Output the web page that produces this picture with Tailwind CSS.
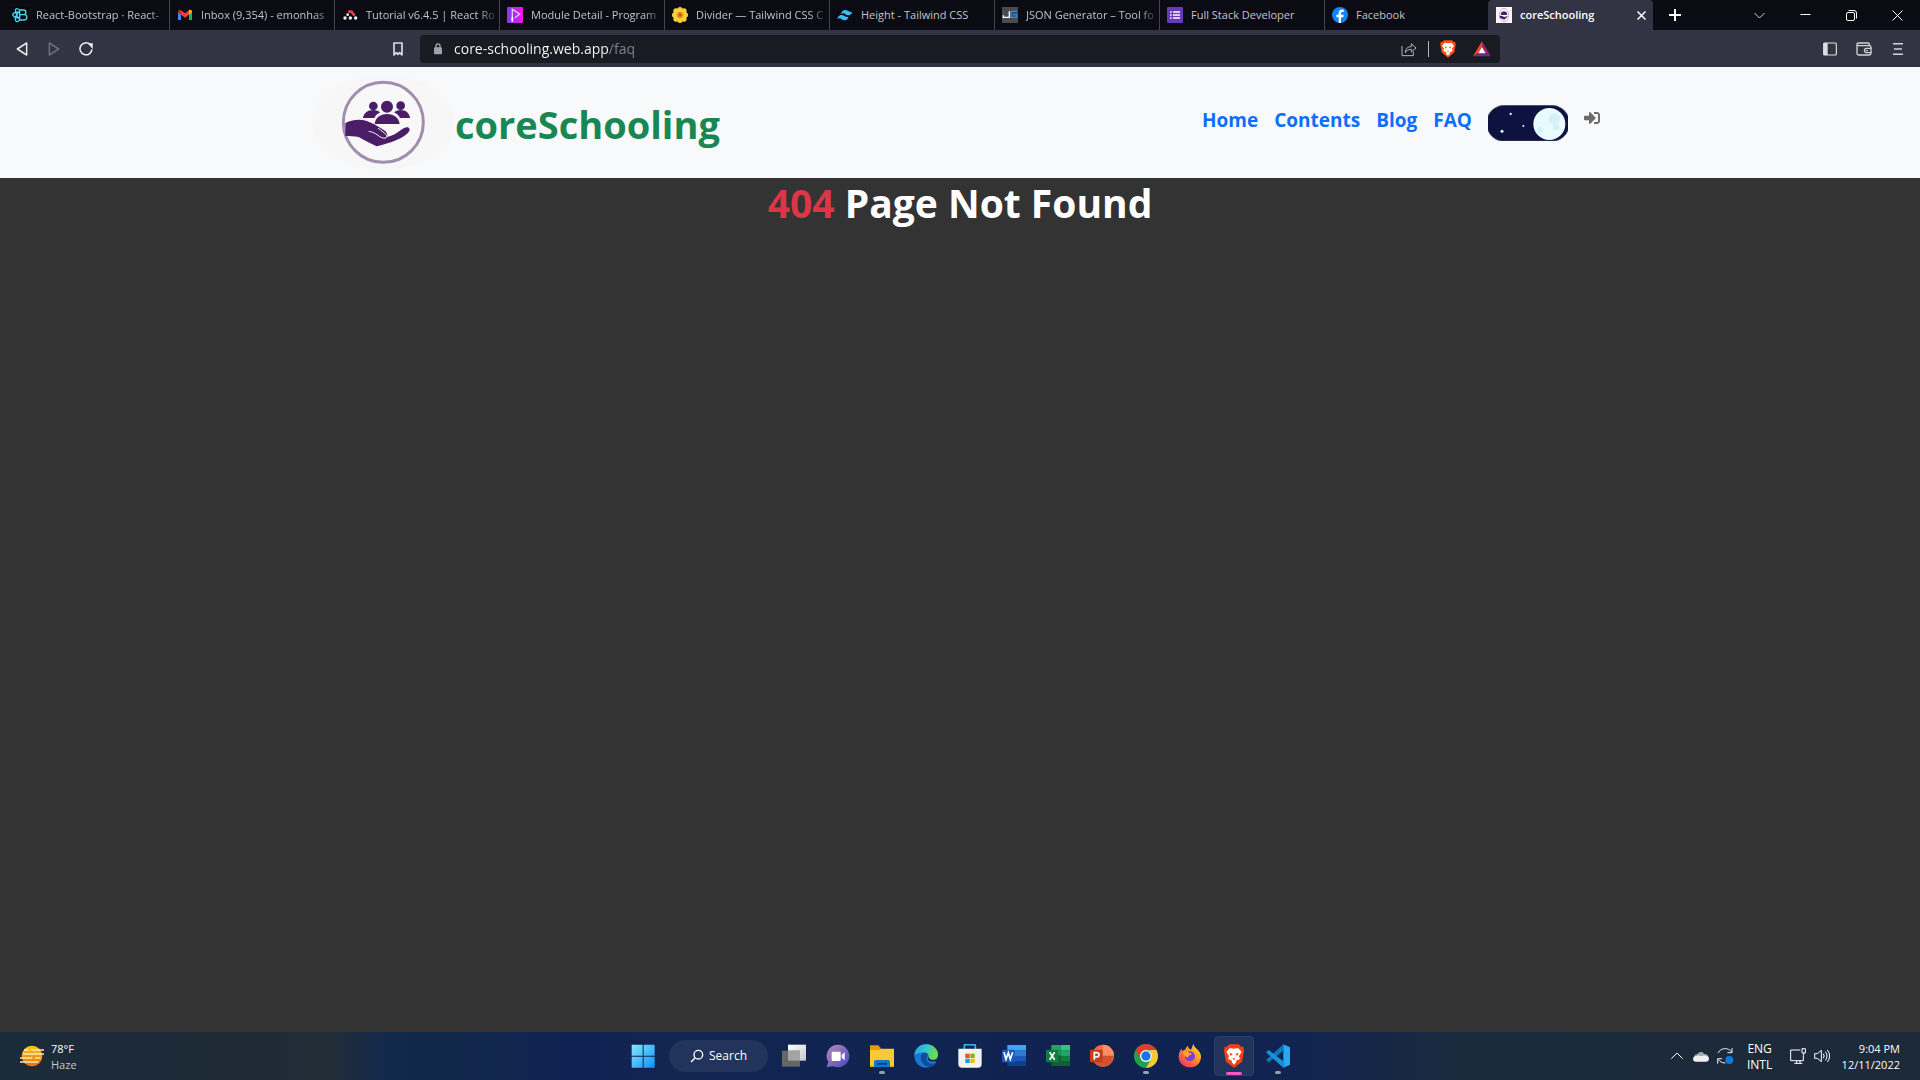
<!DOCTYPE html>
<html lang="en">
<head>
<meta charset="utf-8">
<title>coreSchooling</title>
<script src="https://cdn.jsdelivr.net/npm/@tailwindcss/browser@4"></script>
</head>
<body class="flex min-h-screen flex-col bg-[#333333] font-['Open_Sans','Noto_Sans',sans-serif]">

<!-- Tab strip -->
<div class="flex h-[30px] items-stretch bg-[#0b0b13] pl-1 text-[11px] text-[#c3c4ca]">
  <nav aria-label="Tabs" class="flex min-w-0">
    <a href="#" class="flex w-[165px] items-center gap-2 pl-2">
      <svg class="size-4 shrink-0" viewBox="0 0 48 48"><rect width="48" height="48" fill="#05070a"/><g fill="none" stroke="#41d8f5" stroke-width="4"><path d="M23 9h12c9 0 9 14 0 14H23zM23 23h14c10 0 10 16 0 16H23z"/><path d="M23 15C8 14 0 19 3 25c3 6 12 8 20 8M23 9C12 0 8 7 12 18c2 7 6 14 10 18M23 39C12 50 8 40 11 30c2-6 6-12 12-18"/></g></svg>
      <span class="flex-1 overflow-hidden whitespace-nowrap mask-r-from-85%">React-Bootstrap · React-</span>
    </a>
    <a href="#" class="flex w-[165px] items-center gap-2 bg-linear-to-r from-[#44454c] from-[1px] to-transparent to-[1px] pl-2">
      <svg class="size-4 shrink-0" viewBox="0 0 48 48"><path d="M3 12v27h9V20z" fill="#4285f4"/><path d="M45 12v27h-9V20z" fill="#34a853"/><path d="M12 10v13l12 9 12-9V10l-12 9z" fill="#ea4335"/><path d="M3 15c0-6 5-8 9-5v13l-9-7z" fill="#c5221f"/><path d="M45 15c0-6-5-8-9-5v13l9-7z" fill="#fbbc04"/></svg>
      <span class="flex-1 overflow-hidden whitespace-nowrap mask-r-from-85%">Inbox (9,354) - emonhas</span>
    </a>
    <a href="#" class="flex w-[165px] items-center gap-2 bg-linear-to-r from-[#44454c] from-[1px] to-transparent to-[1px] pl-2">
      <svg class="size-4 shrink-0" viewBox="0 0 48 48"><g fill="#f5f5f5"><circle cx="9" cy="33" r="5"/><circle cx="17" cy="23" r="4"/><circle cx="25" cy="33" r="5"/><circle cx="41" cy="33" r="5"/></g><path d="M22 14h5c7 0 4 9 9 9" fill="none" stroke="#e34050" stroke-width="8" stroke-linecap="round"/></svg>
      <span class="flex-1 overflow-hidden whitespace-nowrap mask-r-from-85%">Tutorial v6.4.5 | React Ro</span>
    </a>
    <a href="#" class="flex w-[165px] items-center gap-2 bg-linear-to-r from-[#44454c] from-[1px] to-transparent to-[1px] pl-2">
      <svg class="size-4 shrink-0" viewBox="0 0 48 48"><defs><linearGradient id="ph" x1="0" x2="1"><stop stop-color="#7b3cf6"/><stop offset="1" stop-color="#f016e8"/></linearGradient></defs><rect width="48" height="48" rx="3" fill="url(#ph)"/><path d="M16 42V7l22 14-14 11" fill="none" stroke="#e8c8ff" stroke-width="4"/><path d="M16 30v14" stroke="#fff" stroke-width="5"/></svg>
      <span class="flex-1 overflow-hidden whitespace-nowrap mask-r-from-85%">Module Detail - Program</span>
    </a>
    <a href="#" class="flex w-[165px] items-center gap-2 bg-linear-to-r from-[#44454c] from-[1px] to-transparent to-[1px] pl-2">
      <svg class="size-4 shrink-0" viewBox="0 0 48 48"><g fill="#f8cf3c"><circle cx="24" cy="8" r="8"/><circle cx="36" cy="12" r="8"/><circle cx="40" cy="24" r="8"/><circle cx="36" cy="36" r="8"/><circle cx="24" cy="40" r="8"/><circle cx="12" cy="36" r="8"/><circle cx="8" cy="24" r="8"/><circle cx="12" cy="12" r="8"/><circle cx="24" cy="24" r="14"/></g><circle cx="24" cy="24" r="9" fill="#e57f12"/><circle cx="24" cy="24" r="4" fill="#c95c08"/></svg>
      <span class="flex-1 overflow-hidden whitespace-nowrap mask-r-from-85%">Divider — Tailwind CSS C</span>
    </a>
    <a href="#" class="flex w-[165px] items-center gap-2 bg-linear-to-r from-[#44454c] from-[1px] to-transparent to-[1px] pl-2">
      <svg class="size-4 shrink-0" viewBox="0 0 48 48"><g fill="#38bdf8"><path d="M12 21c2-8 6-12 13-12 9 0 9 8 21 5-3 8-7 11-12 11-10 0-11-10-22-4z"/><path d="M1 36c2-8 6-12 13-12 9 0 9 8 21 5-3 8-7 11-12 11-10 0-11-10-22-4z"/></g></svg>
      <span class="flex-1 overflow-hidden whitespace-nowrap">Height - Tailwind CSS</span>
    </a>
    <a href="#" class="flex w-[165px] items-center gap-2 bg-linear-to-r from-[#44454c] from-[1px] to-transparent to-[1px] pl-2">
      <svg class="size-4 shrink-0" viewBox="0 0 48 48"><rect width="48" height="48" fill="#4b4c50"/><path d="M4 25v6h18V13" fill="none" stroke="#fff" stroke-width="4"/><path d="M45 13H27v18h17v-8H33" fill="none" stroke="#1d8ff0" stroke-width="4"/></svg>
      <span class="flex-1 overflow-hidden whitespace-nowrap mask-r-from-85%">JSON Generator – Tool fo</span>
    </a>
    <a href="#" class="flex w-[165px] items-center gap-2 bg-linear-to-r from-[#44454c] from-[1px] to-transparent to-[1px] pl-2">
      <svg class="size-4 shrink-0" viewBox="0 0 48 48"><rect width="48" height="48" rx="3" fill="#673ab7"/><path d="M9 15h5M9 24h5M9 33h5M18 15h21M18 24h21M18 33h21" stroke="#fff" stroke-width="5"/></svg>
      <span class="flex-1 overflow-hidden whitespace-nowrap">Full Stack Developer</span>
    </a>
    <a href="#" class="flex w-[164px] items-center gap-2 bg-linear-to-r from-[#44454c] from-[1px] to-transparent to-[1px] pl-2">
      <svg class="size-4 shrink-0" viewBox="0 0 48 48"><circle cx="24" cy="24" r="24" fill="#1186f2"/><path d="M20 48V31h-7v-8h7v-5c0-8 5-12 15-10v7c-5-1-8 0-8 4v4h8l-1 8h-7v17z" fill="#fff"/></svg>
      <span class="flex-1 overflow-hidden whitespace-nowrap">Facebook</span>
    </a>
    <div class="flex w-[165px] items-center gap-2 rounded-t bg-[#323443] pl-2 text-white">
      <svg class="size-4 shrink-0" viewBox="0 0 48 48"><rect width="48" height="48" fill="#faf8fb"/><ellipse cx="24" cy="24" rx="14" ry="20" fill="none" stroke="#c3b5d0" stroke-width="3"/><path d="M14 19q10-12 20 0l-2 5H16zM11 27c7-3 10 2 14 3l11-3-11 11-13-5z" fill="#4a1d66"/></svg>
      <a href="#" class="flex-1 overflow-hidden font-semibold whitespace-nowrap">coreSchooling</a>
      <button aria-label="Close tab" class="flex h-5 w-6 items-center justify-center"><svg class="size-[9px]" viewBox="0 0 9 9" stroke="#fff" stroke-width="1.500"><path d="M.5.5l8 8M8.500.5l-8 8"/></svg></button>
    </div>
  </nav>
  <button aria-label="New tab" class="flex w-11 items-center justify-center"><svg class="size-3" viewBox="0 0 12 12" stroke="#fff" stroke-width="2"><path d="M6 0v12M0 6h12"/></svg></button>
  <div class="ml-auto flex">
    <button aria-label="Search tabs" class="flex w-[46px] items-center justify-center"><svg class="size-[11px]" viewBox="0 0 11 11" fill="none" stroke="#d5d5d9"><path d="M.5 3l5 5 5-5"/></svg></button>
    <button aria-label="Minimize" class="flex w-[46px] items-center justify-center"><svg class="size-[11px]" viewBox="0 0 11 11" stroke="#fff"><path d="M.5 4.500h10"/></svg></button>
    <button aria-label="Restore" class="flex w-[46px] items-center justify-center"><svg class="size-[11px]" viewBox="0 0 11 11" fill="none" stroke="#fff"><rect x=".5" y="2.500" width="8" height="8" rx="1.500"/><path d="M2.500.5H8a2.500 2.500 0 0 1 2.500 2.500v5.500"/></svg></button>
    <button aria-label="Close" class="flex w-[46px] items-center justify-center"><svg class="size-[11px]" viewBox="0 0 11 11" stroke="#fff"><path d="M.5.5l10 10M10.500.5l-10 10"/></svg></button>
  </div>
</div>

<!-- Toolbar -->
<div class="flex h-[37px] items-center bg-[#323443]">
  <div class="flex w-[420px] items-center px-1.5">
    <button aria-label="Back" class="flex h-7 w-8 items-center justify-center"><svg class="size-3.5" viewBox="0 0 42 42" fill="none" stroke="#e8e8ec" stroke-width="4.500" stroke-linejoin="round"><path d="M35 3v36L7 21z"/></svg></button>
    <button aria-label="Forward" class="flex h-7 w-8 items-center justify-center"><svg class="size-3.5" viewBox="0 0 42 42" fill="none" stroke="#6c6e7b" stroke-width="4.500" stroke-linejoin="round"><path d="M7 3v36l28-18z"/></svg></button>
    <button aria-label="Reload" class="flex h-7 w-8 items-center justify-center"><svg class="size-3.5" viewBox="0 0 42 42" fill="none" stroke="#f0f0f3" stroke-width="4.500"><path d="M33 7a18 18 0 1 0 6 15"/><path d="M31 6h8v9z" fill="#f0f0f3"/></svg></button>
    <button aria-label="Bookmark" class="ml-auto flex h-7 w-8 items-center justify-center"><svg class="size-3.5" viewBox="0 0 42 42" fill="none" stroke="#dddde2" stroke-width="5" stroke-linejoin="round"><path d="M9 3h24v36l-7-7-5 5-5-5-7 7z"/></svg></button>
  </div>
  <form class="flex h-7 flex-1 items-center rounded bg-[#181b22] pr-0.5 pl-3.5">
    <svg class="h-3 w-2" viewBox="0 0 24 36"><rect y="13" width="24" height="21" rx="3" fill="#a0a1a8"/><path d="M6 15V9a6 6 0 0 1 12 0v6" fill="none" stroke="#a0a1a8" stroke-width="4"/></svg>
    <input aria-label="Address" type="text" value="core-schooling.web.app/faq" class="ml-3 h-6 min-w-0 flex-1 bg-linear-to-r from-white from-[155px] to-[#81848d] to-[155px] bg-clip-text text-sm text-transparent outline-none">
    <button type="button" aria-label="Share" class="flex w-7 justify-center"><svg class="size-4" viewBox="0 0 48 48" fill="none" stroke="#b5b6bc" stroke-width="3" stroke-linejoin="round"><path d="M3 15v29h34V32"/><path d="M13 35c1-14 8-18 18-18V8l14 13-14 12v-8c-9 0-13 2-18 10z"/></svg></button>
    <span class="mx-[5px] h-4 w-px bg-[#b5b6bc]"></span>
    <button type="button" aria-label="Brave Shields" class="flex w-7 justify-center"><svg class="h-[18px] w-4" viewBox="0 0 48 54"><path d="M12 1h24l5 5 5 0 1 9-4 22-19 16L5 37 1 15l1-9h5z" fill="#fb4f14"/><path d="M14 8l10 2 10-2 8 9-6 9 2 7-9 4 1 4-6 6-6-6 1-4-9-4 2-7-6-9z" fill="#fff"/><path d="M14 19l7 3-4 4zM34 19l-7 3 4 4zM21 32h6l-3 4z" fill="#fb4f14"/></svg></button>
    <button type="button" aria-label="Rewards" class="ml-1 flex w-8 justify-center"><svg class="size-[18px]" viewBox="0 0 54 54"><path d="M27 4L0 49l16-9 11-19z" fill="#ff4724"/><path d="M27 4l27 45-16-9-11-19z" fill="#9e1f63"/><path d="M0 49h54l-16-9H16z" fill="#662d91"/><path d="M27 21L16 40h22z" fill="#fff"/></svg></button>
  </form>
  <div class="flex w-[420px] justify-end pr-[5px]">
    <button aria-label="Sidebar" class="flex h-7 w-[34px] items-center justify-center"><svg class="size-3.5" viewBox="0 0 42 42"><rect x="2" y="3" width="38" height="36" rx="3" fill="none" stroke="#dedee3" stroke-width="3.500"/><path d="M2 3h12v36H2z" fill="#dedee3"/></svg></button>
    <button aria-label="Wallet" class="flex h-7 w-[34px] items-center justify-center"><svg class="size-4" viewBox="0 0 48 48" fill="none" stroke="#d2d3d9" stroke-width="4"><path d="M40 13v-3c0-3-2-4-4-4H8c-7 0-7 8 0 8h32c3 0 5 2 5 5v18c0 3-2 5-5 5H8c-3 0-5-2-5-5V10"/><path d="M46 22H32a6 6 0 0 0 0 13h14M31 29h5"/></svg></button>
    <button aria-label="Menu" class="flex h-7 w-[34px] items-center justify-center"><svg class="size-3.5" viewBox="0 0 42 42" stroke="#d2d3d9" stroke-width="4.500"><path d="M6 5h30M9 21h24M6 37h30"/></svg></button>
  </div>
</div>

<!-- Site header -->
<header class="bg-[#f8f9fa] py-2">
  <div class="mx-auto flex max-w-[1320px] items-center px-3">
    <a href="#" class="flex items-center text-[38px] leading-[48px] font-bold text-[#198754]">
      <svg class="h-[95px] w-[143px]" viewBox="36 27 429 285"><ellipse cx="250" cy="169" rx="214" ry="142" fill="#f7f7f7"/>
        <circle cx="250" cy="169" r="120" fill="#f8f8f9" stroke="#9f8eae" stroke-width="9"/>
        <g fill="#4a1d66"><circle cx="220" cy="120" r="13"/><circle cx="302" cy="119" r="13"/>
        <path d="M189 156c2-14 13-24 31-24 8 0 16 3 21 7-8 4-14 9-18 17zM330 156c-2-14-11-24-29-24-8 0-14 3-19 7 8 4 14 9 18 17z"/>
        <ellipse cx="261" cy="122" rx="18" ry="18"/><path d="M224 174c2-17 15-30 37-30s36 13 38 30z"/>
        <path d="M136 171c22-10 42-12 62-7 18 6 34 15 52 27 10 6 15 14 10 22 20-3 30-12 42-20 8-6 16-11 24-8 6 5 2 12-6 19-19 17-46 25-90 37-20-9-36-18-54-28-13-3-27-3-40-3z"/></g>
        <path d="M206 196c12 2 18 5 28 12 7 6 15 10 24 8 6-4 0-11-6-16-8-6-12-10-18-13" fill="none" stroke="#f8f8f9" stroke-width="3"/>
      </svg>
      <span class="pt-0.5">coreSchooling</span>
    </a>
    <nav aria-label="Main" class="ml-auto flex gap-4 pr-2 text-[19px] leading-8 font-bold text-[#0d6efd]">
      <a href="#">Home</a><a href="#">Contents</a><a href="#">Blog</a><a href="#">FAQ</a>
      <button aria-label="Toggle dark mode" class="mt-px h-9 w-20"><svg class="h-9 w-20" viewBox="924 57 240 108"><path d="M964 165a54 54 0 0 1 14-107h132a54 54 0 0 1 14 107z" fill="#0e1240" stroke="#555a72" stroke-width="2"/><circle cx="1108" cy="114" r="48" fill="#e9fbff"/><g fill="#d4f1f6"><circle cx="1123" cy="98" r="17"/><circle cx="1079" cy="132" r="9"/><circle cx="1128" cy="123" r="10"/></g><g fill="#e9f4ff"><circle cx="992" cy="84" r="3.500"/><circle cx="966" cy="136" r="4.500"/><circle cx="1030" cy="120" r="3"/></g></svg></button>
      <a href="#" aria-label="Log in" class="flex h-7 items-center"><svg class="size-4" viewBox="0 0 512 512" fill="#6c6c6c"><path d="M416 448h-84c-7 0-12-5-12-12v-40c0-7 5-12 12-12h84c18 0 32-14 32-32V160c0-18-14-32-32-32h-84c-7 0-12-5-12-12V76c0-7 5-12 12-12h84c53 0 96 43 96 96v192c0 53-43 96-96 96zM369 239L201 71c-15-15-41-4-41 17v96H24c-13 0-24 11-24 24v96c0 13 11 24 24 24h136v96c0 21 26 32 41 17l168-168c9-9 9-25 0-34z"/></svg></a>
    </nav>
  </div>
</header>

<main class="flex-1">
  <h1 class="text-center text-[39px] leading-[50px] font-bold text-white"><span class="text-[#dc3545]">404</span> Page Not Found</h1>
</main>

<!-- Taskbar -->
<footer class="grid h-12 grid-cols-[1fr_auto_1fr] items-center bg-[linear-gradient(90deg,#1c2b39_0%,#1e2b37_14%,#222d35_17%,#13294c_20%,#12284b_24%,#102253_30%,#122450_34%,#10224f_60%,#112450_68%,#1b2a3d_76%,#1c2a38_100%)] text-[11px] leading-4 text-white">
  <button class="flex items-center gap-1.5 justify-self-start pl-5 text-left">
    <svg class="h-6 w-6" viewBox="0 0 72 72"><defs><linearGradient id="sun" x1="0" y1="0" x2="0" y2="1"><stop stop-color="#fccb13"/><stop offset="1" stop-color="#ee6b08"/></linearGradient></defs><circle cx="36" cy="36" r="31" fill="url(#sun)"/><path d="M12 18h14M33 18h39M8 30h64M0 42h37M45 42h17M0 54h55" stroke="#f8e9bd" stroke-width="5"/></svg>
    <span class="pt-0.5 pl-px">78°F<br><span class="text-[#c3c8cd]">Haze</span></span>
  </button>

  <div class="flex items-center">
    <button aria-label="Start" class="flex w-11 justify-center"><svg class="size-6" viewBox="0 0 72 72"><defs><linearGradient id="win" x1="0" y1="0" x2="1" y2="1"><stop stop-color="#8be4ff"/><stop offset="1" stop-color="#0a94f5"/></linearGradient></defs><path d="M2 2h33v33H2zM38 2h33v33H38zM2 38h33v33H2zM38 38h33v33H38z" fill="url(#win)"/></svg></button>
    <button class="mx-1 flex h-8 w-[99px] items-center justify-center gap-1 rounded-full bg-[#22345c] text-xs"><svg class="size-4" viewBox="0 0 48 48" fill="none" stroke="#fff" stroke-width="4"><circle cx="28" cy="20" r="13"/><path d="M18 30L6 42"/></svg>Search</button>
    <button aria-label="Task view" class="flex w-11 justify-center"><svg class="size-6" viewBox="0 0 72 72"><defs><linearGradient id="tv" x1="0" y1="0" x2="1" y2="1"><stop stop-color="#fff"/><stop offset="1" stop-color="#c7c9cc"/></linearGradient></defs><path d="M18 2h54v48H18z" fill="url(#tv)"/><path d="M0 20h54v48H0z" fill="#666"/><path d="M18 20h36v30H18z" fill="#a2a3a5"/></svg></button>
    <button aria-label="Chat" class="flex w-11 justify-center"><svg class="size-6" viewBox="0 0 72 72"><defs><linearGradient id="ch" x1="0" y1="0" x2="1" y2="1"><stop stop-color="#8a8de0"/><stop offset=".3" stop-color="#9a78b8"/><stop offset="1" stop-color="#4149c5"/></linearGradient></defs><path d="M36 2a34 34 0 1 1-14 65L2 69l5-15A34 34 0 0 1 36 2z" fill="url(#ch)"/><rect x="17" y="23" width="27" height="28" rx="3" fill="#fff"/><path d="M47 33l9-8v24l-9-8z" fill="#fff"/></svg></button>
    <button aria-label="File Explorer" class="relative flex w-11 justify-center"><svg class="size-6" viewBox="0 0 72 72"><path d="M0 4h25l7 8v12H0z" fill="#e09b0b"/><path d="M0 18h26l7-4h39v55H0z" fill="#fbc935"/><path d="M0 65h72v4H0z" fill="#efa61a"/><path d="M12 69V54q0-6 6-6h36q6 0 6 6v15z" fill="#0f78c8"/><path d="M21 57h30v5H21z" fill="#073f86"/></svg><span class="absolute top-[27px] h-[3px] w-1.5 rounded-full bg-[#969eae]"></span></button>
    <button aria-label="Edge" class="flex w-11 justify-center"><svg class="size-6" viewBox="0 0 72 72"><defs><linearGradient id="ed" x1="0" y1="0" x2="1" y2=".3"><stop stop-color="#229ada"/><stop offset=".5" stop-color="#33c4d2"/><stop offset="1" stop-color="#6bdd48"/></linearGradient></defs><circle cx="36" cy="36" r="35" fill="#1678d4"/><path d="M1 33C4 10 20 1 37 1c23 0 35 17 35 30 0 11-9 17-19 17-8 0-12-4-9-9 2-7-4-14-13-14C15 25 3 34 1 33z" fill="url(#ed)"/><path d="M22 31c-7 18 6 37 27 39 8-2 14-7 18-14-12 7-29 2-30-12 0-4 2-7 5-10-4-8-13-9-20-3z" fill="#0c4e99"/><path d="M44 38c-7 8 3 16 13 14 6-1 11 0 10 4 8 2 4-12 4-12-6 6-26 6-27-6z" fill="#12234f"/></svg></button>
    <button aria-label="Microsoft Store" class="flex w-11 justify-center"><svg class="size-6" viewBox="0 0 72 72"><path d="M19 17V5q0-3 3-3h27q3 0 3 3v12" fill="none" stroke="#32b7ee" stroke-width="5"/><path d="M1 14h70v46q0 11-11 11H12Q1 71 1 60z" fill="#f2f2f2"/><path d="M22 29h13v13H22z" fill="#f25022"/><path d="M37 29h13v13H37z" fill="#7fba00"/><path d="M22 44h13v13H22z" fill="#00a4ef"/><path d="M37 44h13v13H37z" fill="#ffb900"/></svg></button>
    <button aria-label="Word" class="flex w-11 justify-center"><svg class="size-6" viewBox="0 0 72 72"><path d="M16 3h56v17H16z" fill="#41a5ee"/><path d="M16 20h56v16H16z" fill="#2b7cd3"/><path d="M16 36h56v15H16z" fill="#185abd"/><path d="M16 51h56v15H16z" fill="#103f91"/><rect y="17" width="38" height="38" rx="3" fill="#185abd"/><path d="M6 25l6 21 7-20 6 20 7-21" fill="none" stroke="#fff" stroke-width="5"/></svg></button>
    <button aria-label="Excel" class="flex w-11 justify-center"><svg class="size-6" viewBox="0 0 72 72"><path d="M16 3h28v32H16z" fill="#21a366"/><path d="M44 3h28v17H44z" fill="#33c481"/><path d="M44 20h28v16H44z" fill="#21a366"/><path d="M16 35h28v16H16z" fill="#185c37"/><path d="M44 36h28v15H44z" fill="#107c41"/><path d="M16 51h56v15H16z" fill="#185c37"/><rect y="17" width="38" height="38" rx="3" fill="#107c41"/><path d="M11 25l15 22M26 25L11 47" stroke="#fff" stroke-width="5"/></svg></button>
    <button aria-label="PowerPoint" class="flex w-11 justify-center"><svg class="size-6" viewBox="0 0 72 72"><circle cx="39" cy="35" r="33" fill="#ed6c47"/><path d="M39 2a33 33 0 0 1 33 33H39z" fill="#ff8f6b"/><path d="M6 35h66a33 33 0 0 1-66 0z" fill="#d35230"/><rect y="17" width="38" height="38" rx="3" fill="#c43e1c"/><path d="M13 47V26h7q7 0 7 6.500T20 39h-7" fill="none" stroke="#fff" stroke-width="5"/></svg></button>
    <button aria-label="Chrome" class="relative flex w-11 justify-center"><svg class="size-6" viewBox="0 0 72 72"><circle cx="36" cy="36" r="36" fill="#22a04b"/><path d="M5 18a36 36 0 0 1 62 0H36a18 18 0 0 0-16 27z" fill="#e33b2e"/><path d="M67 18a36 36 0 0 1-31 54l16-27a18 18 0 0 0-1-19l-5-8z" fill="#fcc934"/><circle cx="36" cy="36" r="18" fill="#fff"/><circle cx="36" cy="36" r="14" fill="#1a73e8"/></svg><span class="absolute top-[27px] h-[3px] w-1.5 rounded-full bg-[#969eae]"></span></button>
    <button aria-label="Firefox" class="flex w-11 justify-center"><svg class="size-6" viewBox="0 0 72 72"><defs><linearGradient id="ff" x1="1" y1="0" x2=".2" y2="1"><stop stop-color="#ffe94a"/><stop offset=".45" stop-color="#ff9a20"/><stop offset="1" stop-color="#f32c66"/></linearGradient></defs><path d="M46 0c3 9 8 12 14 18 5 5 9 13 9 20 0 19-15 32-33 32C16 70 2 56 2 38c0-11 3-18 9-24l2 8c2-3 5-5 9-5 1-5 4-9 8-11 0 6 4 9 9 11z" fill="url(#ff)"/><circle cx="36" cy="37" r="15" fill="#7a3fd8"/><path d="M15 25c6-4 13-4 19 1 6 0 8 3 6 6-6 1-9 3-9 8-9 1-14-7-16-15z" fill="#ffa42a"/></svg></button>
    <button aria-label="Brave" class="relative mx-0.5 flex h-10 w-10 items-center justify-center rounded border border-[#2c3f66] bg-[#22345c]"><svg class="size-6" viewBox="0 0 72 72"><path d="M22 1h28l7 7 7 0 2 12-6 33-24 18L12 53 6 20l2-12h7z" fill="#fb3d14"/><path d="M24 12l12 2 12-2 11 12-8 12 3 9-12 5 1 4-7 8-7-8 1-4-12-5 3-9-8-12z" fill="#fff"/><path d="M22 26l10 4-6 6zM50 26l-10 4 6 6zM32 43h8l-4 6z" fill="#fb3d14"/></svg><span class="absolute bottom-0 h-[3px] w-4 rounded-full bg-[#f758c5]"></span></button>
    <button aria-label="Visual Studio Code" class="relative flex w-11 justify-center"><svg class="size-6" viewBox="0 0 72 72"><path d="M52 1l20 9v52l-20 9z" fill="#27a9f1"/><path d="M52 1v19L8 55l-8-7z" fill="#0878bd"/><path d="M0 25l8-7 44 34v19z" fill="#1592d9"/></svg><span class="absolute top-[27px] h-[3px] w-1.5 rounded-full bg-[#969eae]"></span></button>
  </div>

  <div class="flex items-center justify-self-end pr-5">
    <button aria-label="Show hidden icons" class="mr-2.5"><svg class="h-3 w-3" viewBox="0 0 36 36" fill="none" stroke="#fff" stroke-width="3"><path d="M1 26l17-17 17 17"/></svg></button>
    <button aria-label="OneDrive" class="mr-2"><svg class="size-4" viewBox="0 0 48 48"><path d="M3 30C2 22 8 18 13 19c4-9 17-9 20-1 9 0 15 6 14 14z" fill="#a5a8ac"/><path d="M0 33c0-8 8-10 12-9 4-2 8-2 12 1 8-5 23-3 24 7 0 5-4 9-9 9H9c-5 0-9-3-9-8z" fill="#f0f0f0"/></svg></button>
    <button aria-label="Updates" class="mr-3"><svg class="h-4 w-[17px]" viewBox="0 0 51 48" fill="none" stroke="#eee" stroke-width="3"><path d="M3 15C11-1 34-3 44 12M45 0v14H31M25 45C15 45 8 41 4 34M2 47V32h13"/><circle cx="37" cy="36" r="12" fill="#0b7bdd" stroke="none"/></svg></button>
    <button class="mr-4 w-7 pt-0.5 text-center text-xs leading-4">ENG<br>INTL</button>
    <button aria-label="Network" class="mr-2"><svg class="size-4" viewBox="0 0 48 48" fill="none" stroke="#fff" stroke-width="3"><path d="M31 6H2v32h38V22M13 46h24M20 38v8M30 38v8"/><path d="M36 2h10v13H36zM41 15v7"/></svg></button>
    <button aria-label="Volume" class="mr-3"><svg class="size-4" viewBox="0 0 48 48" fill="none" stroke="#fff" stroke-width="3"><path d="M2 17h8l12-10v34L10 31H2zM28 17q5 7 0 14M34 11q10 13 0 26M40 6q14 18 0 36"/></svg></button>
    <button class="pt-0.5 text-right whitespace-nowrap">9:04 PM<br>12/11/2022</button>
  </div>
</footer>
</body>
</html>
